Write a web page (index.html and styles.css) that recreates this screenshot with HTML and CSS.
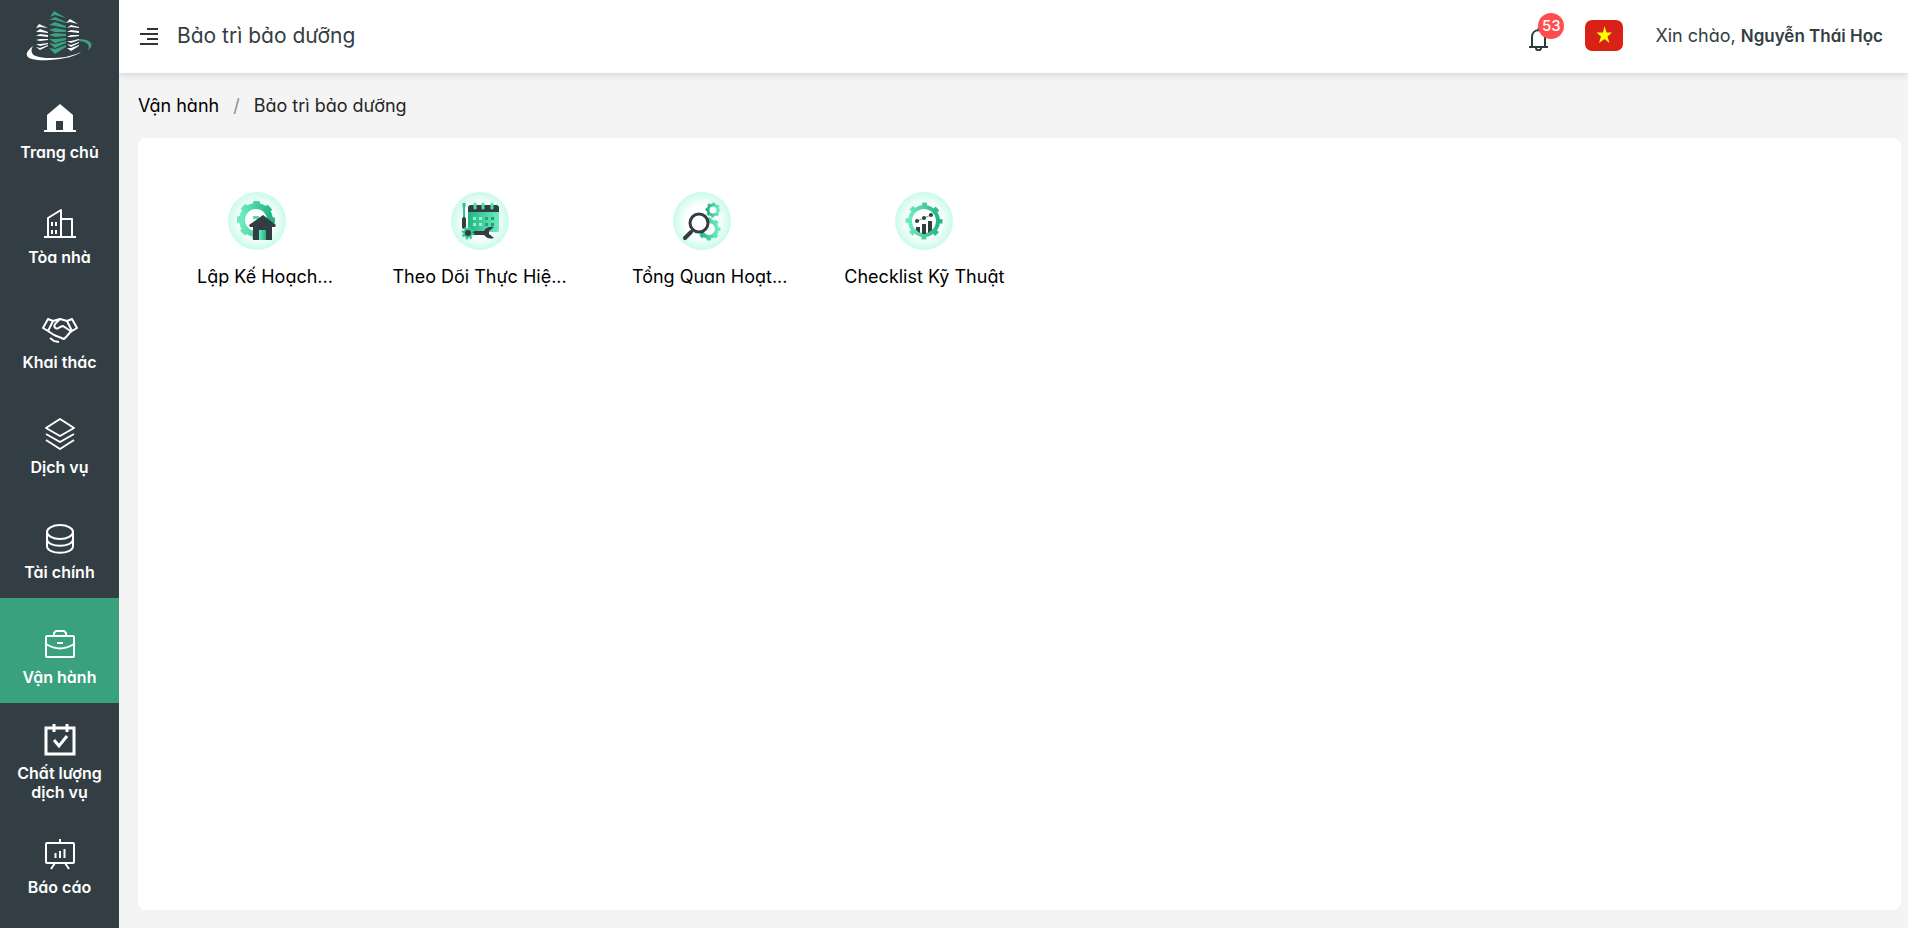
FILE: index.html
```html
<!DOCTYPE html>
<html lang="vi">
<head>
<meta charset="utf-8">
<meta name="viewport" content="width=device-width, initial-scale=1">
<title>Bảo trì bảo dưỡng</title>
<link rel="stylesheet" href="styles.css">
</head>
<body>
<div class="app">
  <aside class="sidebar">
    <a class="logo" href="#" aria-label="Logo">
      <svg width="70" height="52" viewBox="0 0 70 52">
        <g fill="#3aa17e">
          <path d="M29 0l12 7-11-3-5 2z"/>
          <path d="M24 9l6-3 11 5v1l-11-3z"/>
          <path d="M24 14l6-3 11 4v2l-11-2z"/>
          <path d="M24 19l6-2 11 2v2l-11 0z"/>
          <path d="M24 24l6-2 11 1v2l-11 1z"/>
          <path d="M24 28l6 0 11-1v2l-11 3z"/>
          <path d="M24 32l6 1 11-3v2l-11 5z"/>
          <path d="M24 37l6 1 11-4v2l-11 7z"/>
          <path d="M54 28c10 0 14 4 12 8l-3 4c2-5 1-9-9-10z"/>
        </g>
        <g fill="#fff">
          <path d="M14 13l9 4-8-1-4 1zM11 21l4-3 8 3v1l-8-1zM11 25l4-2 8 1v2l-8-1zM11 29l4-1h8v1l-8 1zM11 33l4 0 8-1v1l-8 2zM11 36l4 1 8-3v1l-8 4z"/>
          <path d="M45 8l8 5-8-2-4 1zM42 17l4-3 8 2v1l-8-1zM42 21l4-2 8 1v2l-8-1zM42 26l4-2h8v1l-8 1zM42 30h4l8-2v1l-8 3zM42 33l4 1 8-3v1l-8 4zM42 37l4 0 8-3v1l-8 5z"/>
          <path d="M8 35C-8 48 10 50 25 49s26-4 31-8c-11 5-20 6-31 6-14 0-22-3-17-12z"/>
        </g>
      </svg>
    </a>
    <nav class="menu">
      <a class="menu-item" href="#">
        <svg class="menu-icon" viewBox="0 0 36 36"><path fill="#fff" d="M18 3L5 14v15H2v2h32v-2h-3V14zM14 20h7v9h-7z" fill-rule="evenodd"/></svg>
        <span>Trang chủ</span>
      </a>
      <a class="menu-item" href="#">
        <svg class="menu-icon line" viewBox="0 0 36 36"><path d="M2 31h32M6 31V12l13-8v27M19 13h11v18M10 16v4M14 16v4M10 24v4M14 24v4"/></svg>
        <span>Tòa nhà</span>
      </a>
      <a class="menu-item" href="#">
        <svg class="menu-icon line" viewBox="0 0 36 36"><path d="M6 8l5 2-5 10-5-3zM30 8l5 9-5 3-5-10zM11 10l7-2 7 2M18 8l-5 5c-2 4 2 6 5 3l3-1 9 6M30 19l-5 6-3 3-10-4-6-4M22 28l-3-1M8 27l4 3 5 1"/></svg>
        <span>Khai thác</span>
      </a>
      <a class="menu-item" href="#">
        <svg class="menu-icon line" viewBox="0 0 36 36"><path d="M18 3l14 9-14 8-14-8zM4 18l14 8 14-8M4 24l14 9 14-9"/></svg>
        <span>Dịch vụ</span>
      </a>
      <a class="menu-item" href="#">
        <svg class="menu-icon line" viewBox="0 0 36 36"><ellipse cx="18" cy="11" rx="13" ry="7"/><path d="M5 11v14c0 9 26 9 26 0V11M5 18c0 9 26 9 26 0"/></svg>
        <span>Tài chính</span>
      </a>
      <a class="menu-item active" href="#" aria-current="page">
        <svg class="menu-icon line" viewBox="0 0 36 36"><rect x="4" y="10" width="28" height="21" rx="1"/><path d="M12 10V7l2-2h8l2 2v3M4 18c10 6 18 6 28 0M15 17h6"/></svg>
        <span>Vận hành</span>
      </a>
      <a class="menu-item" href="#">
        <svg class="menu-icon bold" viewBox="0 0 36 36"><path d="M4 6h28v26H4zM12 2v8M25 2v8M12 18l5 6 8-10"/></svg>
        <span>Chất lượng dịch vụ</span>
      </a>
      <a class="menu-item" href="#">
        <svg class="menu-icon line" viewBox="0 0 36 36"><rect x="4" y="7" width="28" height="20" rx="1"/><path d="M18 3v4M13 27l-4 6M23 27l4 6M13.500 17v5M18 15v7M22.500 13v9"/></svg>
        <span>Báo cáo</span>
      </a>
    </nav>
  </aside>

  <div class="main">
    <header class="topbar">
      <button class="toggle" type="button" aria-label="Menu">
        <svg width="18" height="18" viewBox="0 0 18 18"><path fill="none" stroke="#333" stroke-width="2" d="M7 2h11M0 7h18M7 12h11M0 17h18"/></svg>
      </button>
      <h1 class="title">Bảo trì bảo dưỡng</h1>
      <div class="tools">
        <button class="bell" type="button" aria-label="Thông báo">
          <svg width="20" height="24" viewBox="0 0 20 24"><path fill="none" stroke="#2f3a3f" stroke-width="2" d="M0 20h19M3 20V10c0-9 13-9 13 0v10M7 21c0 3 5 3 5 0M9.500 4V1"/></svg>
          <span class="badge">53</span>
        </button>
        <button class="flag" type="button" aria-label="Tiếng Việt">
          <svg width="38" height="31" viewBox="0 0 38 31"><rect width="38" height="31" rx="7" fill="#da2118"/><path fill="#ff0" d="M19.500 6l2 6.500H27l-4.500 4 2 6.500-5-4-5.500 4 2-6.500-4.500-4H18z"/></svg>
        </button>
        <span class="hello">Xin chào, <b>Nguyễn Thái Học</b></span>
      </div>
    </header>

    <nav class="crumbs" aria-label="Breadcrumb">
      <a href="#">Vận hành</a><span class="sep">/</span><span class="here">Bảo trì bảo dưỡng</span>
    </nav>

    <main class="card">
      <svg class="defs" width="0" height="0" aria-hidden="true">
        <defs>
          <radialGradient id="halo"><stop offset=".55" stop-color="#fff"/><stop offset="1" stop-color="#c9fbe9"/></radialGradient>
          <linearGradient id="mint"><stop offset="0" stop-color="#6debbd"/><stop offset="1" stop-color="#22b581"/></linearGradient>
          <linearGradient id="leaf"><stop offset="0" stop-color="#22b581"/><stop offset="1" stop-color="#6debbd"/></linearGradient>
        </defs>
      </svg>
      <div class="tiles">
        <a class="tile" href="#">
          <svg class="tile-icon" viewBox="0 0 58 58">
            <circle cx="29" cy="29" r="29" fill="url(#halo)"/>
            <g fill="none" stroke="url(#mint)"><circle cx="28" cy="28" r="14" stroke-width="6"/><circle cx="28" cy="28" r="17" stroke-width="4" stroke-dasharray="6.700 6.650" stroke-dashoffset="3.300"/></g>
            <path fill="#54dca9" d="M25 24h6v3h-6z"/>
            <path fill="#333e44" d="M35 23l13 10-1 2h-3v13H25V35h-3l-1-2z"/><path fill="url(#mint)" d="M31 38h7v10h-7z"/>
          </svg>
          <span class="tile-label">Lập Kế Hoạch<span class="more">...</span></span>
        </a>
        <a class="tile" href="#">
          <svg class="tile-icon" viewBox="0 0 58 58">
            <circle cx="29" cy="29" r="29" fill="url(#halo)"/>
            <rect x="17" y="14" width="31" height="26" rx="2" fill="url(#leaf)"/>
            <path fill="#333e44" d="M17 20v-4q0-3 3-3h25q3 0 3 3v4z"/>
            <path stroke="#54dca9" stroke-width="3" stroke-linecap="round" d="M24 12v4M32 12v4M41 12v4"/>
            <path fill="#8df4cf" d="M22 25h3v3h-3zM28 25h3v3h-3zM22 31h3v3h-3zM28 31h3v3h-3z"/><path fill="#1fa677" d="M34 25h3v3h-3zM40 25h3v3h-3zM34 31h3v3h-3zM40 31h3v3h-3z"/>
            <path stroke="#2fc28d" stroke-width="2" d="M13 12v14"/><path stroke="#2fc28d" stroke-width="3" d="M13 11v4"/>
            <path stroke="#333e44" stroke-width="4" stroke-linecap="round" d="M13 27v8"/>
            <path fill="#333e44" d="M18 39h15q3-5 10-4l-5 4v3l5 4q-6 2-10-3H18z"/>
            <circle cx="17" cy="41" r="4" fill="#333e44" stroke="#36c994" stroke-width="2"/><circle cx="17" cy="41" r="5.500" fill="none" stroke="#36c994" stroke-width="2" stroke-dasharray="2.200 2.120"/>
          </svg>
          <span class="tile-label">Theo Dõi Thực Hiệ...</span>
        </a>
        <a class="tile" href="#">
          <svg class="tile-icon" viewBox="0 0 58 58">
            <circle cx="29" cy="29" r="29" fill="url(#halo)"/>
            <g fill="none" stroke="url(#leaf)"><circle cx="40" cy="18" r="5" stroke-width="3"/><circle cx="40" cy="18" r="6.500" stroke-width="2" stroke-dasharray="2.600 2.500" stroke-dashoffset="1.300"/><circle cx="36" cy="37" r="8" stroke-width="4"/><circle cx="36" cy="37" r="10" stroke-width="3" stroke-dasharray="4 3.850" stroke-dashoffset="2"/></g>
            <circle cx="26" cy="31" r="9" fill="#fff" stroke="#333e44" stroke-width="3"/><path d="M20 38l-3 3" stroke="#333e44" stroke-width="2"/><path d="M18 40l-6 6" stroke="#333e44" stroke-width="4" stroke-linecap="round"/>
          </svg>
          <span class="tile-label">Tổng Quan Hoạt<span class="more">...</span></span>
        </a>
        <a class="tile" href="#">
          <svg class="tile-icon" viewBox="0 0 58 58">
            <circle cx="29" cy="29" r="29" fill="url(#halo)"/>
            <circle cx="29" cy="29" r="14" fill="#fff" stroke="url(#mint)" stroke-width="4"/>
            <circle cx="29" cy="29" r="16.500" fill="none" stroke="url(#mint)" stroke-width="4" stroke-dasharray="5 7.960" stroke-dashoffset="2.500"/>
            <path fill="#333e44" d="M21 35h4v6l-4-3zM27 32h4v10h-4zM33 29h4v9l-4 3z"/>
            <path fill="none" stroke="#36c994" d="M22 29l7-3 7-3"/><g fill="#333e44"><circle cx="22" cy="29" r="2"/><circle cx="29" cy="26" r="2"/><circle cx="36" cy="23" r="2"/></g>
          </svg>
          <span class="tile-label">Checklist Kỹ Thuật</span>
        </a>
      </div>
    </main>
  </div>
</div>
</body>
</html>
```
FILE: styles.css
```css
* { box-sizing: border-box; }
body {
  margin: 0;
  font-family: Inter, "Noto Sans", sans-serif;
  font-feature-settings: "cv11";
  font-size: 18px;
  color: #333e44;
  background: #f4f4f4;
}
a { color: inherit; text-decoration: none; }
button { padding: 0; border: 0; background: none; font: inherit; color: inherit; cursor: pointer; }
svg { display: block; }

.app { display: flex; min-height: 100vh; }

.sidebar { position: relative; z-index: 1; flex: none; width: 119px; background: #333e44; }
.logo { display: flex; justify-content: center; height: 73px; padding-top: 11px; }
.menu-item {
  display: flex;
  flex-direction: column;
  align-items: center;
  justify-content: center;
  gap: 6px;
  height: 105px;
  padding: 12px 8px 0;
  color: #fff;
  font-size: 16px;
  font-weight: 600;
  line-height: 19px;
  text-align: center;
}
.menu-item.active { background: #3aa17e; }
.menu-icon { width: 36px; height: 36px; }
.line, .bold { fill: none; stroke: #fff; stroke-width: 2; stroke-linejoin: round; }
.bold { stroke-width: 3; stroke-linejoin: miter; }

.main { flex: 1; min-width: 0; display: flex; flex-direction: column; }

.topbar {
  display: flex;
  align-items: center;
  height: 73px;
  padding: 0 25px 2px 21px;
  background: #fff;
  box-shadow: 0 2px 6px #d4d4e0;
}
.title { margin: 0 0 0 19px; font-size: 21px; font-weight: 400; line-height: 24px; }
.tools { display: flex; align-items: center; margin-left: auto; }
.bell { position: relative; padding-top: 6px; }
.badge {
  position: absolute;
  top: -8px;
  left: 9px;
  min-width: 26px;
  height: 26px;
  border-radius: 13px;
  background: #ff4d4f;
  color: #fff;
  font-size: 15px;
  font-weight: 500;
  line-height: 26px;
  text-align: center;
}
.flag { margin: 0 32px 0 36px; }
.hello { white-space: nowrap; }
.hello b { font-size: 17px; font-weight: 600; }

.crumbs { display: flex; padding: 20px 19px; line-height: 25px; color: #000; }
.sep { margin: 0 14px; color: #8c8c8c; }
.here { color: #262626; }

.card { flex: 1; margin: 0 7px 18px 19px; padding: 54px 0 24px 32px; border-radius: 8px; background: #fff; }
.defs { position: absolute; }
.tiles { display: grid; grid-template-columns: repeat(8, 1fr); gap: 48px; }
.tile { display: flex; flex-direction: column; align-items: center; gap: 14px; color: #000; }
.tile-icon { width: 58px; height: 58px; }
.tile-label { line-height: 25px; white-space: nowrap; }
/* The ellipsis hangs past the centred words */
.more { display: inline-block; width: 0; }
```
